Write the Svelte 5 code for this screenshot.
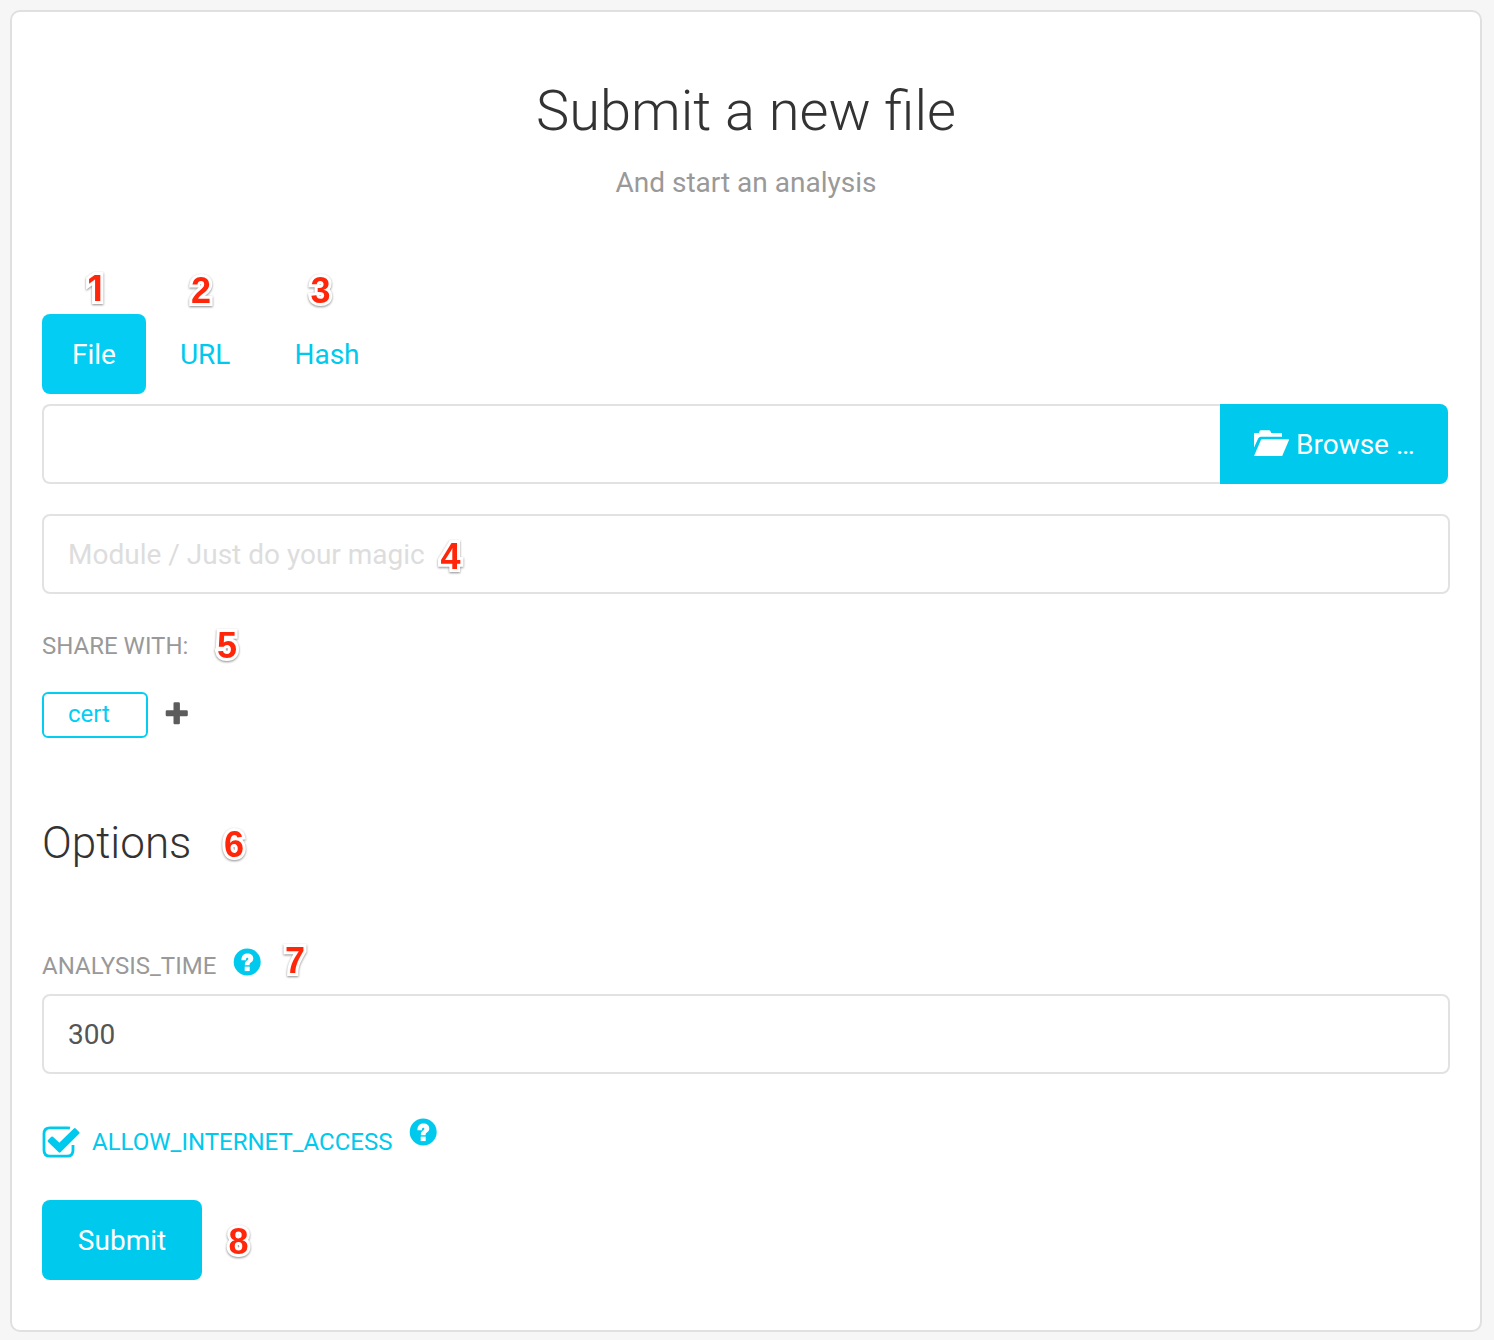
<script lang="ts">
  const tabs = ['File', 'URL', 'Hash'];
  let active = $state('File');
  let analysisTime = $state('300');

  // Callout numbers pinned over the form: digit centre x, baseline y
  const pins = [
    { n: 1, x: 95, y: 301 },
    { n: 2, x: 201, y: 302.5 },
    { n: 3, x: 320.5, y: 302.5 },
    { n: 4, x: 450.5, y: 568.5 },
    { n: 5, x: 227, y: 658 },
    { n: 6, x: 234, y: 856.5 },
    { n: 7, x: 295, y: 972.5 },
    { n: 8, x: 238.5, y: 1254 },
  ];
</script>

{#snippet help()}
  <svg class="help" width="28" height="28" viewBox="0 0 28 28" aria-hidden="true">
    <circle cx="14.2" cy="14" r="13.5" fill="#00c9ee" />
    <path d="M8.4 12.2C8.4 7.8 10.4 5.5 14.4 5.5C18.1 5.5 20.3 7.5 20.3 10.5C20.3 12.5 19.3 13.6 17.9 14.5C16.9 15.2 16.6 15.7 16.6 17.3H11.8C11.8 14.7 12.5 13.5 14 12.5C14.9 11.9 15.3 11.5 15.3 10.8C15.3 10.2 14.9 9.8 14.3 9.8C13.4 9.8 13 10.6 12.9 12.2Z" fill="#fff" />
    <rect x="11.7" y="18.6" width="5" height="4.5" fill="#fff" />
  </svg>
{/snippet}

<main class="card">
  <header>
    <h1>Submit a new file</h1>
    <p>And start an analysis</p>
  </header>

  <nav class="tabs">
    {#each tabs as tab}
      <button type="button" class="tab" class:active={active === tab} onclick={() => (active = tab)}>{tab}</button>
    {/each}
  </nav>

  <div class="file-row">
    <div class="file-name"></div>
    <button type="button" class="browse">
      <svg width="36" height="28" viewBox="0 0 36 28" aria-hidden="true">
        <path d="M0 3H4.8L5.8 .8Q6 .3 6.8 .3H15.2Q16 .3 16.3 .9L17.3 3H28V6.7H6.8Q5 6.7 4.3 8.3L0 17.5Z" fill="#fff" />
        <path d="M7 9.7Q7.4 9.3 8 9.3H34.5Q35.2 9.3 35 9.9L28.2 26H0Z" fill="#fff" />
      </svg>
      <span>Browse …</span>
    </button>
  </div>

  <div class="field module">Module / Just do your magic</div>

  <div class="label share">SHARE WITH:</div>
  <div class="groups">
    <span class="tag">cert</span>
    <svg width="23" height="23" viewBox="0 0 23 23" aria-hidden="true">
      <path d="M9.7 .3H13.7Q14.9 .3 14.9 1.5V8.2H21.6Q22.8 8.2 22.8 9.4V13.1Q22.8 14.3 21.6 14.3H14.9V21.1Q14.9 22.3 13.7 22.3H9.7Q8.5 22.3 8.5 21.1V14.3H1.9Q.7 14.3 .7 13.1V9.4Q.7 8.2 1.9 8.2H8.5V1.5Q8.5 .3 9.7 .3Z" fill="#5c5c5c" />
    </svg>
  </div>

  <h2>Options</h2>

  <div class="label time"><span>ANALYSIS_TIME</span>{@render help()}</div>
  <input class="field" bind:value={analysisTime} />

  <div class="check">
    <svg width="38" height="34" viewBox="0 0 38 34" aria-hidden="true">
      <path d="M28 4.1Q26.8 3.8 25.5 3.8H8Q2 3.8 2 9.8V26.2Q2 32.2 8 32.2H25Q31 32.2 31 26.2V21" fill="none" stroke="#00c9ee" stroke-width="2.8" />
      <path d="M7 17L10 13.8L17.4 20.4L32.8 5.4L36.2 8.9L17.6 27.3Z" fill="#00c9ee" stroke="#00c9ee" stroke-width="2.6" stroke-linejoin="round" />
    </svg>
    <span>ALLOW_INTERNET_ACCESS</span>
    {@render help()}
  </div>

  <button type="button" class="submit">Submit</button>
</main>

{#each pins as pin}
  <span class="pin" class:one={pin.n === 1} style="left:{pin.x}px;top:{pin.y}px">{pin.n}</span>
{/each}

<style>
  :global(body) {
    background: #f6f6f6;
  }
  * {
    box-sizing: border-box;
  }
  .card {
    width: 1472px;
    height: 1322px;
    margin: 10px;
    margin-bottom: 8px;
    padding: 69px 30px 0;
    border: 2px solid #e0e0e0;
    border-radius: 10px;
    background: #fff;
    font: 28px/40px Roboto, sans-serif;
    color: #555;
    display: flex;
    flex-direction: column;
  }
  header {
    height: 233px;
    text-align: center;
  }
  h1 {
    margin: 0;
    font-size: 56px;
    line-height: 60px;
    font-weight: 300;
    color: #333;
  }
  p {
    margin: 22px 0 0;
    color: #999;
  }
  button {
    border: 0;
    padding: 2px 0 0;
    font: inherit;
    color: #fff;
    background: #00c9ee;
  }
  .tabs {
    display: flex;
    gap: 4px;
    height: 80px;
  }
  .tab {
    padding: 2px 30px 0;
    border-radius: 8px;
    background: transparent;
    color: #00c9ee;
  }
  .tab.active {
    background: #04cdf4;
    color: #fff;
  }
  .file-row {
    display: flex;
    height: 80px;
    margin-top: 10px;
    padding-right: 2px;
  }
  .file-name {
    flex: 1;
    border: 2px solid #e2e2e2;
    border-right: 0;
    border-radius: 8px 0 0 8px;
  }
  .browse {
    width: 228px;
    padding: 0 0 0 34px;
    border-radius: 0 8px 8px 0;
    display: flex;
    align-items: center;
    gap: 6px;
  }
  .browse span {
    padding-top: 2px;
  }
  .field {
    width: 100%;
    height: 80px;
    padding: 0 24px;
    border: 2px solid #e2e2e2;
    border-radius: 8px;
    background: #fff;
    font: inherit;
    color: #555;
    outline: 0;
  }
  .module {
    margin-top: 30px;
    line-height: 78px;
    color: #ddd;
  }
  .label {
    font-size: 24px;
    color: #999;
  }
  .share {
    margin-top: 32px;
  }
  .groups {
    display: flex;
    align-items: center;
    gap: 17px;
    height: 46px;
    margin-top: 26px;
  }
  .groups svg {
    margin-bottom: 4px;
  }
  .tag {
    width: 106px;
    height: 46px;
    padding-left: 24px;
    border: 2px solid #04cdf4;
    border-radius: 6px;
    font-size: 24px;
    line-height: 41px;
    color: #04cdf4;
  }
  h2 {
    margin: 75px 0 0;
    font-size: 44px;
    line-height: 60px;
    font-weight: 300;
    color: #333;
  }
  .time {
    display: flex;
    gap: 17px;
    margin: 73px 0 8px;
  }
  .help {
    flex: none;
    margin-top: 2px;
  }
  .check {
    display: flex;
    height: 40px;
    margin-top: 48px;
    font-size: 24px;
    color: #00c9ee;
  }
  .check > svg:first-child {
    margin: 2px 12px 0 0;
  }
  .check .help {
    margin: -4px 0 0 16px;
  }
  .submit {
    width: 160px;
    height: 80px;
    margin-top: 38px;
    border-radius: 8px;
  }
  .pin {
    position: absolute;
    width: 40px;
    margin: -33px 0 0 -20px;
    font: bold 36px/41px "Liberation Sans", sans-serif;
    text-align: center;
    color: #ff260a;
    -webkit-text-stroke: 6px #fff;
    paint-order: stroke fill;
    stroke-linejoin: round;
    filter: drop-shadow(0 1.5px 1.2px rgba(0, 0, 0, 0.45));
  }
  .pin.one {
    font-family: Inter, sans-serif;
    font-size: 35px;
  }
</style>
